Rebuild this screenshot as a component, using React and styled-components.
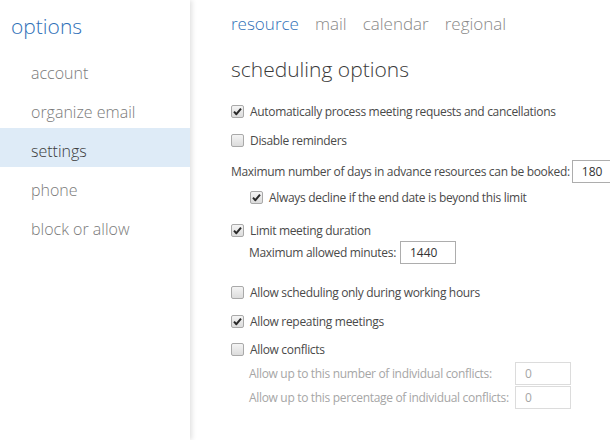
import React from 'react';
import styled, { createGlobalStyle } from 'styled-components';

const GlobalStyle = createGlobalStyle`
  html, body {
    margin: 0;
    padding: 0;
    background: #fff;
  }
  body {
    font-family: "Open Sans", "Liberation Sans", sans-serif;
    color: #333;
  }
`;

const Page = styled.div`
  display: flex;
  width: 610px;
  height: 440px;
  overflow: hidden;
`;

const Sidebar = styled.nav`
  width: 190px;
  flex-shrink: 0;
  position: relative;
  z-index: 1;
  background: #fff;
  box-shadow: 2px 0 5px rgba(0, 0, 0, 0.12);
`;

const SideTitle = styled.div`
  height: 50px;
  padding-left: 11px;
  font-size: 21px;
  font-weight: 300;
  line-height: 52px;
  color: #2f70b8;
`;

const NavItem = styled.div`
  height: 39px;
  box-sizing: border-box;
  padding: 4px 0 0 31px;
  line-height: 39px;
  font-size: 16px;
  font-weight: 300;
  color: ${p => (p.$active ? '#3a3a3a' : '#7a7a7a')};
  background: ${p => (p.$active ? '#deebf7' : 'transparent')};
`;

const Main = styled.main`
  flex: 1;
  padding-left: 41px;
  font-size: 12px;
  letter-spacing: -0.32px;
`;

const Tabs = styled.div`
  display: flex;
  gap: 16px;
  height: 47px;
  align-items: center;
  letter-spacing: 0;
`;

const Tab = styled.span`
  font-size: 17px;
  font-weight: 300;
  color: ${p => (p.$active ? '#2f70b8' : '#888')};
`;

const Heading = styled.h2`
  margin: 0;
  height: 45px;
  line-height: 45px;
  font-size: 21px;
  font-weight: 300;
  letter-spacing: 0;
  color: #3a3a3a;
`;

const Form = styled.div`
  display: flex;
  flex-direction: column;
  padding-top: 9px;
`;

const Row = styled.div`
  display: flex;
  align-items: center;
  height: ${p => (p.$tall ? 23 : 20)}px;
  margin-top: ${p => p.$mt || 0}px;
  padding-left: ${p => p.$indent || 0}px;
  color: ${p => (p.$disabled ? '#a6a6a6' : '#4a4a4a')};
  white-space: nowrap;
`;

const Box = styled.span`
  width: 11px;
  height: 11px;
  flex-shrink: 0;
  border: 1px solid #a9a9a9;
  border-radius: 2px;
  background: linear-gradient(#f4f4f4, #dcdcdc);
  margin-right: 6px;
  display: flex;
  align-items: center;
  justify-content: center;
`;

const Label = styled.span`
  box-sizing: border-box;
  padding-left: ${p => p.$pad || 0}px;
  width: ${p => (p.$w ? p.$w + 'px' : 'auto')};
  flex-shrink: 0;
`;

const Field = styled.span`
  box-sizing: border-box;
  height: 23px;
  width: ${p => p.$w}px;
  margin-left: ${p => p.$gap ?? 4}px;
  border: 1px solid ${p => (p.$disabled ? '#dcdcdc' : '#adadad')};
  padding-left: 9px;
  display: flex;
  align-items: center;
  letter-spacing: 0;
  color: ${p => (p.$disabled ? '#a6a6a6' : '#333')};
  flex-shrink: 0;
`;

const Check = ({ on }) => (
  <Box>
    {on && (
      <svg width="9" height="9" viewBox="0 0 9 9">
        <path d="M1 4.6 L3.4 7.2 L8 1.6" fill="none" stroke="#2a2a2a" strokeWidth="2" strokeLinejoin="round" />
      </svg>
    )}
  </Box>
);

const navItems = ['account', 'organize email', 'settings', 'phone', 'block or allow'];

export default function App() {
  return (
    <>
      <GlobalStyle />
      <Page>
        <Sidebar>
          <SideTitle>options</SideTitle>
          {navItems.map(n => (
            <NavItem key={n} $active={n === 'settings'}>{n}</NavItem>
          ))}
        </Sidebar>
        <Main>
          <Tabs>
            <Tab $active>resource</Tab>
            <Tab>mail</Tab>
            <Tab>calendar</Tab>
            <Tab>regional</Tab>
          </Tabs>
          <Heading>scheduling options</Heading>
          <Form>
            <Row><Check on />Automatically process meeting requests and cancellations</Row>
            <Row $mt={9}><Check />Disable reminders</Row>
            <Row $tall $mt={10}>
              <Label>Maximum number of days in advance resources can be booked:</Label>
              <Field $w={50} $gap={2}>180</Field>
            </Row>
            <Row $mt={4} $indent={19}><Check on />Always decline if the end date is beyond this limit</Row>
            <Row $mt={13}><Check on />Limit meeting duration</Row>
            <Row $tall $mt={1}>
              <Label $pad={18}>Maximum allowed minutes:</Label>
              <Field $w={56}>1440</Field>
            </Row>
            <Row $mt={18}><Check />Allow scheduling only during working hours</Row>
            <Row $mt={9}><Check on />Allow repeating meetings</Row>
            <Row $mt={8}><Check />Allow conflicts</Row>
            <Row $tall $mt={3} $disabled>
              <Label $pad={18} $w={280}>Allow up to this number of individual conflicts:</Label>
              <Field $w={56} $disabled>0</Field>
            </Row>
            <Row $tall $mt={1} $disabled>
              <Label $pad={18} $w={280}>Allow up to this percentage of individual conflicts:</Label>
              <Field $w={56} $disabled>0</Field>
            </Row>
          </Form>
        </Main>
      </Page>
    </>
  );
}
